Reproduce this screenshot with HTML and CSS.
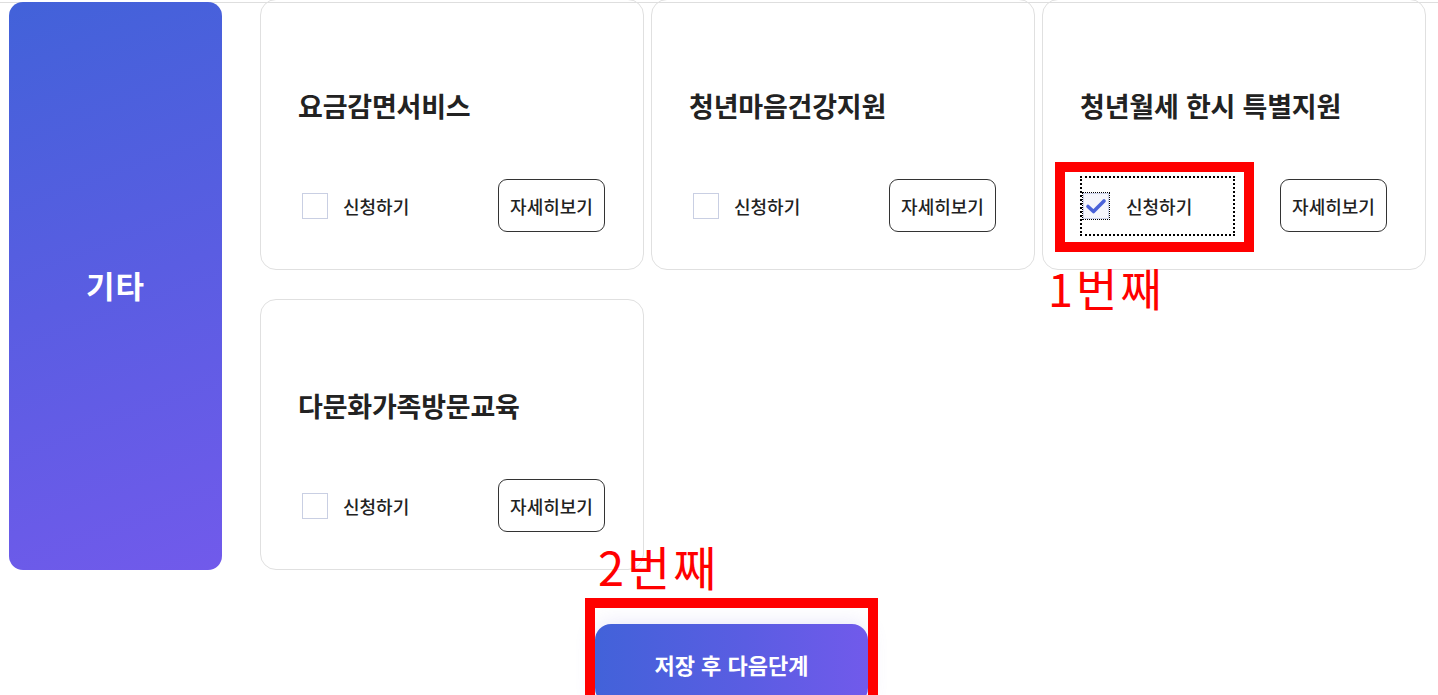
FILE: index.html
```html
<!DOCTYPE html>
<html lang="ko">
<head>
<meta charset="utf-8">
<title>서비스 신청</title>
<link rel="stylesheet" href="styles.css">
</head>
<body>
<div class="page">
  <section class="category">
    <div class="side"><span>기타</span></div>
    <div class="cards">
      <div class="card">
        <h3 class="title">요금감면서비스</h3>
        <div class="row">
          <label class="apply"><span class="box"></span><span class="lbl">신청하기</span></label>
          <button class="detail">자세히보기</button>
        </div>
      </div>
      <div class="card">
        <h3 class="title">청년마음건강지원</h3>
        <div class="row">
          <label class="apply"><span class="box"></span><span class="lbl">신청하기</span></label>
          <button class="detail">자세히보기</button>
        </div>
      </div>
      <div class="card">
        <h3 class="title">청년월세 한시 특별지원</h3>
        <div class="row">
          <label class="apply focused">
            <span class="box checked">
              <svg viewBox="0 0 26 26" width="26" height="26"><path d="M5 13.5 L10.5 18.5 L21 8" fill="none" stroke="#4a62d8" stroke-width="3.6" stroke-linecap="round" stroke-linejoin="round"/></svg>
            </span>
            <span class="lbl">신청하기</span>
          </label>
          <button class="detail">자세히보기</button>
          <div class="mark mark1"></div>
          <div class="note note1">1번째</div>
        </div>
      </div>
      <div class="card">
        <h3 class="title">다문화가족방문교육</h3>
        <div class="row">
          <label class="apply"><span class="box"></span><span class="lbl">신청하기</span></label>
          <button class="detail">자세히보기</button>
        </div>
      </div>
    </div>
  </section>
  <div class="actions">
    <div class="next-wrap">
      <div class="note note2">2번째</div>
      <div class="mark mark2"></div>
      <button class="next">저장 후 다음단계</button>
    </div>
  </div>
</div>
</body>
</html>
```
FILE: styles.css
```css
html, body {
  margin: 0;
  padding: 0;
  background: #fff;
  overflow: hidden;
}
body {
  font-family: "Noto Sans CJK KR", "Noto Sans", sans-serif;
  color: #222;
}
.page {
  padding-top: 2px;
  height: 693px;
  overflow: hidden;
}
.category {
  display: flex;
  align-items: flex-start;
  border-top: 1px solid #dedede;
}
.side {
  width: 213px;
  height: 568px;
  margin-left: 9px;
  margin-right: 38px;
  margin-top: -1px;
  border-radius: 14px;
  background: linear-gradient(160deg, #4262d9 0%, #5a5de2 50%, #715aeb 100%);
  display: flex;
  align-items: center;
  justify-content: center;
}
.side span {
  color: #fff;
  font-size: 31px;
  font-weight: 700;
  letter-spacing: 1px;
  margin-top: -3px;
}
.cards {
  display: grid;
  grid-template-columns: 384px 384px 384px;
  grid-auto-rows: 271px;
  column-gap: 7px;
  row-gap: 29px;
  margin-top: -4px;
}
.card {
  border: 1px solid #e0e0e0;
  border-radius: 16px;
  box-sizing: border-box;
  padding: 87px 38px 0 37px;
  display: flex;
  flex-direction: column;
}
.title {
  margin: 0;
  font-size: 27px;
  font-weight: 700;
  line-height: 38px;
  color: #222;
  letter-spacing: -0.2px;
}
.row {
  position: relative;
  margin-top: 54px;
  display: flex;
  align-items: center;
  justify-content: space-between;
  height: 53px;
}
.apply {
  display: inline-flex;
  align-items: center;
  width: 153px;
  height: 58px;
  box-sizing: border-box;
  padding-left: 4px;
}
.box {
  width: 26px;
  height: 26px;
  box-sizing: border-box;
  border: 1px solid #c9cfe3;
  background: #fff;
  display: inline-block;
  margin-right: 15px;
}
.box.checked {
  border-color: #ccd2ea;
  background: #f4f5fb;
  outline: 1px dotted #000;
  display: inline-flex;
}
.box.checked svg {
  margin: -1px;
}
.focused {
  outline: 2px dotted #000;
  outline-offset: -1px;
  padding-left: 2px;
  margin-left: 1px;
}
.focused .box {
  margin-right: 17px;
}
.lbl {
  font-size: 18px;
  font-weight: 500;
  color: #222;
}
.detail {
  width: 107px;
  height: 53px;
  border: 1px solid #333;
  border-radius: 9px;
  background: #fff;
  font-family: inherit;
  font-size: 18px;
  font-weight: 500;
  color: #222;
  padding: 0;
}
.mark {
  position: absolute;
  border: 10px solid #ff0000;
  box-sizing: border-box;
  pointer-events: none;
}
.mark1 {
  left: -25px;
  top: -17px;
  width: 199px;
  height: 90px;
}
.note {
  position: absolute;
  color: #ff0000;
  font-family: "Noto Sans CJK KR", sans-serif;
  font-weight: 400;
  white-space: nowrap;
}
.note1 {
  left: -32px;
  top: 82px;
  font-size: 45px;
  line-height: 54px;
  letter-spacing: 3px;
}
.actions {
  display: flex;
  padding-left: 595px;
  margin-top: 54px;
}
.next-wrap {
  position: relative;
}
.note2 {
  left: 3px;
  top: -87px;
  font-size: 47px;
  line-height: 58px;
  letter-spacing: 3px;
}
.mark2 {
  left: -10px;
  top: -26px;
  width: 293px;
  height: 130px;
}
.next {
  width: 273px;
  height: 80px;
  border: 0;
  border-radius: 16px;
  background: linear-gradient(90deg, #4262d9 0%, #5a5de2 55%, #715aeb 100%);
  color: #fff;
  font-family: inherit;
  font-size: 22px;
  font-weight: 700;
  box-shadow: 0 0 20px rgba(110, 100, 220, 0.18);
  padding: 0;
}
```
